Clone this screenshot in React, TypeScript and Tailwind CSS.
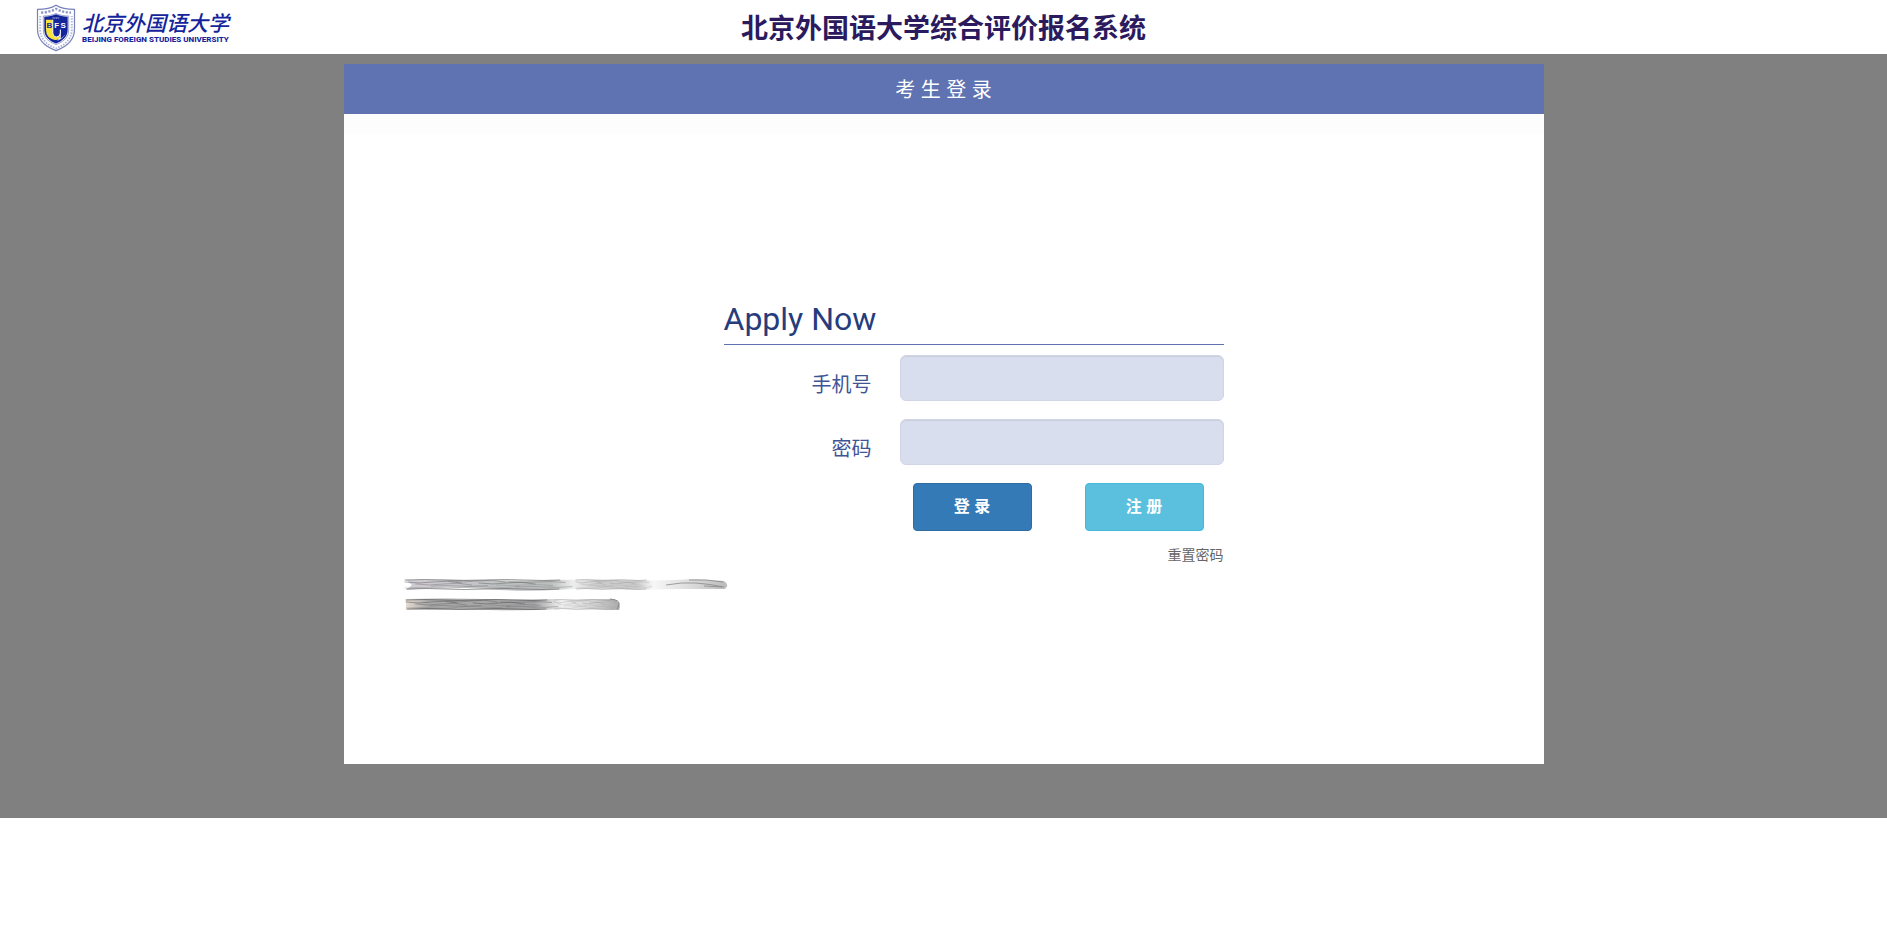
import React from "react";

const cjk = "font-['Liberation_Sans','Noto_Sans_CJK_SC',sans-serif]";

function Crest() {
  return (
    <svg viewBox="0 0 40 48" className="h-12 w-10 shrink-0" role="img" aria-label="BFSU">
      <defs>
        <path id="crest-top" d="M5 8.6Q13 8.500 20 4.800Q27 8.500 35 8.600" />
        <path id="crest-rim" d="M4.200 12V26C4.700 36 12 41.500 20 44.300C28 41.500 35.300 36 35.800 26V12" />
      </defs>
      <path
        d="M20 1.200C14.500 4.600 8 5.400 1.500 5.400V25C1.500 36.500 10 43 20 46.600C30 43 38.500 36.500 38.500 25V5.400C32 5.400 25.500 4.600 20 1.200Z"
        fill="#fff" stroke="#7781bb" strokeWidth="1.200"
      />
      <use href="#crest-top" fill="none" stroke="#8d96c6" strokeWidth="2.400" strokeDasharray="2.200 1.500" />
      <use href="#crest-rim" fill="none" stroke="#b4bada" strokeWidth="2" strokeDasharray="1.500 1.300" />
      <path
        d="M20 9.500C16 11.300 11.500 12 7.300 12V26C7.300 33.800 13 38 20 40.500C27 38 32.700 33.800 32.700 26V12C28.500 12 24 11.300 20 9.500Z"
        fill="#fff" stroke="#5964ab" strokeWidth=".6"
      />
      <path d="M20 10.300C16.500 12 12.500 12.700 8.300 12.800V26C8.300 33 14 37.300 20 39.500C26 37.300 31.700 33 31.700 26V12.800C27.500 12.700 23.500 12 20 10.300Z" fill="#14249b" />
      <path d="M10 15.800H16.800V29Q17 33 20.500 33Q23.500 32.500 23.800 30V34Q22 36.500 19 36Q10 34 10 26Z" fill="#f7e23c" />
      <path d="M16.800 15.800V29Q17 33 20.500 33Q24 33 24.300 29V25.500" fill="none" stroke="#fff" strokeWidth=".9" />
      <path d="M24.300 26H30V27.500Q29 34 21 37Q24.300 34 24.300 30Z" fill="#fff" />
      <path d="M25 25H31V27Q29 32.500 24.500 34.500Q25 32 25 30Z" fill="#14249b" />
      <path d="M16.500 14H23.500" stroke="#c7cce8" strokeWidth="1.200" strokeDasharray="1.200 .5" />
      <g fontFamily="Liberation Sans, sans-serif" fontWeight="700" fontSize="8">
        <text x="10.600" y="23.500" fill="#14249b">B</text>
        <text x="18.200" y="23.500" fill="#fff">F</text>
        <text x="24.600" y="23.500" fill="#fff">S</text>
      </g>
    </svg>
  );
}

const streaks = [
  [0, 4, 2], [0, 10, -1], [12, 6, 2], [30, 8, -1], [50, 3, 2], [66, 9, -2],
  [84, 5, 2], [104, 7, 1], [118, 4, 1], [126, 9, -1],
];

function Scribble({ x, y, scale, color }: { x: number; y: number; scale: number; color: string }) {
  return (
    <g transform={`translate(${x} ${y}) scale(${scale} 1)`} fill="none" stroke={color} strokeLinecap="round">
      {streaks.map(([sx, sy, b], i) => (
        <path
          key={i}
          strokeWidth={i % 3 === 0 ? 0.8 : 0.6}
          opacity={i % 2 ? 0.45 : 0.7}
          d={`M${sx} ${sy}q16 ${b} 32 0t32 ${b / 2}`}
        />
      ))}
      <path strokeWidth=".7" d="M0 2q22-1 44 0t46 0t46 0t40 0M2 11q24-1 44 0t45 0t44 0t40 0" />
    </g>
  );
}

function Redacted() {
  return (
    <svg viewBox="0 0 330 40" width="330" height="40" aria-hidden="true">
      <defs>
        <linearGradient id="line-a">
          <stop offset="0" stopColor="#d0ccd4" />
          <stop offset=".3" stopColor="#bfc2c2" />
          <stop offset=".45" stopColor="#bcbfbf" />
          <stop offset=".52" stopColor="#eee" />
          <stop offset=".6" stopColor="#ccc" />
          <stop offset=".72" stopColor="#ccc" />
          <stop offset=".77" stopColor="#f7f7f7" />
          <stop offset=".88" stopColor="#ddd" />
          <stop offset="1" stopColor="#bbb" />
        </linearGradient>
        <linearGradient id="line-b">
          <stop offset="0" stopColor="#e4dad0" />
          <stop offset=".1" stopColor="#aaa" />
          <stop offset=".6" stopColor="#a3a3a5" />
          <stop offset=".73" stopColor="#f2f2f2" />
          <stop offset=".9" stopColor="#ccc" />
          <stop offset="1" stopColor="#aaa" />
        </linearGradient>
        <filter id="smudge"><feGaussianBlur stdDeviation=".7 .5" /></filter>
        <filter id="pencil"><feGaussianBlur stdDeviation=".6 .3" /></filter>
      </defs>
      <path filter="url(#smudge)" fill="url(#line-a)" d="M2 3Q40 2 80 3T150 3T220 3T290 2L320 4Q326 8 321 12L270 12Q240 13 210 12T150 13T80 12T2 13L8 8Z" />
      <path filter="url(#smudge)" fill="url(#line-b)" d="M2 22Q40 21 80 22T150 22L210 22Q218 26 215 33L160 32Q120 34 85 33T2 33Z" />
      <g filter="url(#pencil)">
        <Scribble x={1} y={1} scale={0.88} color="#666" />
        <Scribble x={172} y={1} scale={0.4} color="#999" />
        <path d="M262 8q16-3 30-2t28 4M285 3q18-1 34 2M300 9l18 1" stroke="#888" strokeWidth=".8" fill="none" />
        <Scribble x={2} y={21} scale={0.8} color="#555" />
        <Scribble x={150} y={21} scale={0.34} color="#999" />
        <path d="M206 22q10 1 9 5t-2 5" stroke="#888" fill="none" />
      </g>
    </svg>
  );
}

function Field({ id, label, type }: { id: string; label: string; type: string }) {
  return (
    <div className="flex items-center gap-7">
      <label htmlFor={id} className="flex-1 pt-3.5 text-right text-xl leading-7 text-[#3f5595]">
        {label}
      </label>
      <input
        id={id}
        type={type}
        className="h-[46px] w-[324px] rounded-md border border-[#d0d6e6] bg-[#d8deed] px-4 text-lg shadow-[inset_0_1px_1px_rgba(0,0,0,0.075)] outline-none"
      />
    </div>
  );
}

export default function App() {
  return (
    <div className={`bg-white ${cjk}`}>
      <header className="grid h-[54px] grid-cols-[1fr_auto_1fr] items-center">
        <a href="#" className="flex items-center gap-[6px] pt-px pl-9 text-[#14249b]">
          <Crest />
          <span className="flex flex-col">
            <span className="font-['Noto_Sans_CJK_SC',sans-serif] text-[21px] leading-6 font-medium italic">北京外国语大学</span>
            <span className="font-[Roboto,sans-serif] text-[8px] leading-3 font-extrabold whitespace-nowrap">BEIJING FOREIGN STUDIES UNIVERSITY</span>
          </span>
        </a>
        <h1 className="pt-1 text-[27px] leading-8 font-bold text-[#2b1b5e]">北京外国语大学综合评价报名系统</h1>
      </header>
      <main className="bg-[#808080] pt-[10px] pb-[54px]">
        <section className="mx-auto min-h-[700px] w-full max-w-[1200px] bg-white">
          <h2 className="flex h-[50px] items-center justify-center bg-[#5f73b2] pt-0.5 text-xl text-white">考 生 登 录</h2>
          <div className="h-5 bg-[#fdfdfd]" />
          <form className="mt-40 ml-[380px] w-[500px]" onSubmit={(e) => e.preventDefault()}>
            <h3 className="border-b border-[#5f73b2] pt-[5px] pb-[5px] font-[Roboto,sans-serif] text-[32px] leading-10 text-[#263c7d]">
              Apply Now
            </h3>
            <div className="mt-[10px] flex flex-col gap-[18px]">
              <Field id="phone" label="手机号" type="tel" />
              <Field id="password" label="密码" type="password" />
            </div>
            <div className="mt-[18px] flex justify-end gap-[53px] pr-5">
              <button type="submit" className="h-12 w-[119px] rounded border border-[#2e6da4] bg-[#337ab7] text-base font-bold text-white">
                登 录
              </button>
              <button type="button" className="h-12 w-[119px] rounded border border-[#46b8da] bg-[#5bc0de] text-base font-bold text-white">
                注 册
              </button>
            </div>
            <div className="mt-[14px] text-right text-sm leading-5">
              <a href="#reset" className="text-[#666]">重置密码</a>
            </div>
          </form>
          <div className="mt-3 ml-[60px]">
            <Redacted />
          </div>
        </section>
      </main>
    </div>
  );
}
